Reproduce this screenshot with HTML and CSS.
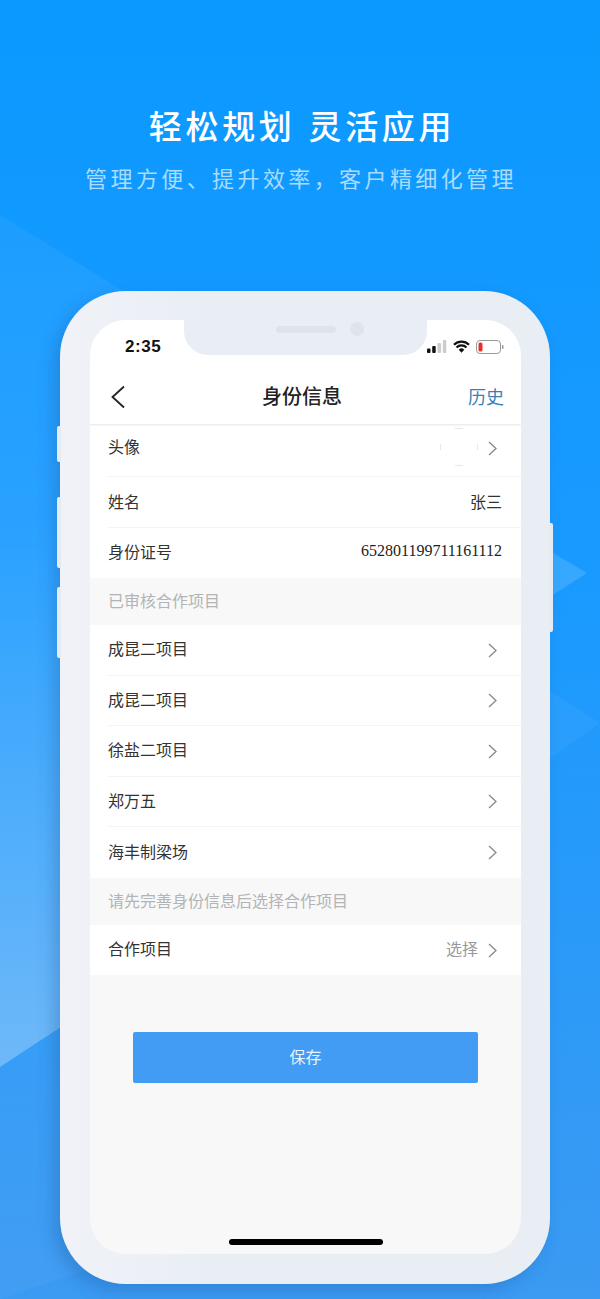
FILE: index.html
```html
<!DOCTYPE html>
<html lang="zh-CN">
<head>
  <meta charset="UTF-8">
  <meta name="viewport" content="width=device-width, initial-scale=1.0">
  <title>身份信息</title>
  <link rel="stylesheet" href="styles.css">
</head>
<body>
  <svg class="bg-shapes" width="600" height="1299" viewBox="0 0 600 1299">
    <defs>
      <linearGradient id="left-shape" x1="0" y1="0" x2="0" y2="1">
        <stop offset="0" stop-color="#fff" stop-opacity="0.05"/>
        <stop offset="0.35" stop-color="#fff" stop-opacity="0.07"/>
        <stop offset="1" stop-color="#fff" stop-opacity="0.3"/>
      </linearGradient>
    </defs>
    <polygon points="0,215 300,400 300,870 0,1067" fill="url(#left-shape)"/>
    <polygon points="0,1067 300,870 300,1200 0,1299" fill="#fff" opacity="0.04"/>
    <polygon points="470,504 587,573 470,648" fill="#fff" opacity="0.13"/>
    <polygon points="470,640 600,723 470,815" fill="#fff" opacity="0.045"/>
  </svg>

  <header class="hero">
    <h1>轻松规划 灵活应用</h1>
    <p>管理方便、提升效率&#xFF0C;客户精细化管理</p>
  </header>

  <div class="phone">
    <span class="side-btn btn-mute"></span>
    <span class="side-btn btn-up"></span>
    <span class="side-btn btn-down"></span>
    <span class="side-btn btn-power"></span>

    <div class="screen">
      <div class="notch"><span class="speaker"></span><span class="camera"></span></div>

      <div class="status-bar">
        <span class="time">2:35</span>
        <div class="status-icons">
          <svg width="20" height="13" viewBox="0 0 20 13">
            <rect x="0" y="8.500" width="3.500" height="4.500" rx="1" fill="#111"/>
            <rect x="5.200" y="6" width="3.500" height="7" rx="1" fill="#111"/>
            <rect x="10.500" y="3" width="3.500" height="10" rx="1" fill="#ccc"/>
            <rect x="15.800" y="0" width="3.500" height="13" rx="1" fill="#ccc"/>
          </svg>
          <svg width="17" height="13" viewBox="0 0 17 13">
            <path d="M1 4.800a10.600 10.600 0 0 1 15 0M3.500 7.500a7 7 0 0 1 10 0" fill="none" stroke="#111" stroke-width="2.200"/>
            <path d="M5.700 9.700a4 4 0 0 1 5.600 0L8.500 12.800z" fill="#111"/>
          </svg>
          <svg width="28" height="14" viewBox="0 0 28 14">
            <rect x="0.500" y="0.500" width="24" height="13" rx="3.500" fill="#fff" stroke="#999"/>
            <rect x="2.500" y="2.500" width="4" height="9" rx="1.500" fill="#e8302a"/>
            <rect x="26" y="5" width="1.500" height="4" rx="0.700" fill="#999"/>
          </svg>
        </div>
      </div>

      <nav class="nav-bar">
        <svg class="back" width="16" height="24" viewBox="0 0 16 24"><path d="M13 1.500 1.500 12 13 22.500" fill="none" stroke="#222" stroke-width="1.800"/></svg>
        <span class="nav-title">身份信息</span>
        <span class="nav-action">历史</span>
      </nav>

      <div class="group">
        <div class="row row-avatar">
          <span class="label">头像</span>
          <div class="right">
            <svg class="avatar" width="38" height="38" viewBox="0 0 38 38">
              <path d="M15 .5h8M15 37.500h8M.5 16v6M37.500 16v6" stroke="#e8e8e8" fill="none"/>
            </svg>
            <svg class="chevron" width="10" height="15" viewBox="0 0 10 15"><path d="M1 1l7 6.500L1 14" fill="none" stroke="#888" stroke-width="1.300"/></svg>
          </div>
        </div>
        <div class="row row-name"><span class="label">姓名</span><span class="value">张三</span></div>
        <div class="row row-id"><span class="label">身份证号</span><span class="value id-number">652801199711161112</span></div>
      </div>

      <div class="section-title">已审核合作项目</div>

      <div class="group">
        <div class="row"><span class="label">成昆二项目</span><svg class="chevron" width="10" height="15" viewBox="0 0 10 15"><path d="M1 1l7 6.500L1 14" fill="none" stroke="#888" stroke-width="1.300"/></svg></div>
        <div class="row"><span class="label">成昆二项目</span><svg class="chevron" width="10" height="15" viewBox="0 0 10 15"><path d="M1 1l7 6.500L1 14" fill="none" stroke="#888" stroke-width="1.300"/></svg></div>
        <div class="row"><span class="label">徐盐二项目</span><svg class="chevron" width="10" height="15" viewBox="0 0 10 15"><path d="M1 1l7 6.500L1 14" fill="none" stroke="#888" stroke-width="1.300"/></svg></div>
        <div class="row"><span class="label">郑万五</span><svg class="chevron" width="10" height="15" viewBox="0 0 10 15"><path d="M1 1l7 6.500L1 14" fill="none" stroke="#888" stroke-width="1.300"/></svg></div>
        <div class="row"><span class="label">海丰制梁场</span><svg class="chevron" width="10" height="15" viewBox="0 0 10 15"><path d="M1 1l7 6.500L1 14" fill="none" stroke="#888" stroke-width="1.300"/></svg></div>
      </div>

      <div class="section-title">请先完善身份信息后选择合作项目</div>

      <div class="group">
        <div class="row row-last">
          <span class="label">合作项目</span>
          <div class="right"><span class="hint">选择</span><svg class="chevron" width="10" height="15" viewBox="0 0 10 15"><path d="M1 1l7 6.500L1 14" fill="none" stroke="#888" stroke-width="1.300"/></svg></div>
        </div>
      </div>

      <button class="save-btn" type="button">保存</button>

      <span class="home-bar"></span>
    </div>
  </div>
</body>
</html>
```

FILE: styles.css
```css
* { box-sizing: border-box; }
body {
  position: relative;
  width: 600px;
  height: 1299px;
  margin: 0;
  overflow: hidden;
  background: linear-gradient(180deg, #0b99ff 0%, #1a9aff 45%, #3b9af2 100%);
  font-family: "Liberation Sans", "Noto Sans CJK SC", sans-serif;
}
.bg-shapes { position: absolute; left: 0; top: 0; }

.hero { position: relative; height: 291px; padding-top: 106px; text-align: center; }
.hero h1 { margin: 0; padding-left: 4px; font-size: 33px; line-height: 44px; font-weight: 500; letter-spacing: 3.700px; color: #fff; }
.hero p { margin: 15px 0 0; padding-left: 2px; font-size: 22px; line-height: 30px; letter-spacing: 3.400px; color: #a9dcff; }

.phone {
  position: relative;
  width: 490px;
  height: 993px;
  margin-left: 60px;
  padding: 29px 29px 30px 30px;
  background: linear-gradient(90deg, #f0f2f7 0%, #e9eef5 30%);
  border-radius: 66px;
  box-shadow: -6px 6px 16px rgba(30, 80, 150, 0.3);
}
.side-btn { position: absolute; width: 4px; background: #e6ebf2; }
.btn-mute { left: -3px; top: 135px; height: 36px; border-radius: 2px 0 0 2px; }
.btn-up { left: -3px; top: 206px; height: 71px; border-radius: 2px 0 0 2px; }
.btn-down { left: -3px; top: 296px; height: 71px; border-radius: 2px 0 0 2px; }
.btn-power { right: -3px; top: 232px; height: 109px; border-radius: 0 2px 2px 0; }

.screen {
  position: relative;
  display: flex;
  flex-direction: column;
  height: 100%;
  background: #f8f8f9;
  border-radius: 36px;
  overflow: hidden;
}
.notch {
  position: absolute;
  left: 94px;
  top: 0;
  display: flex;
  align-items: center;
  justify-content: center;
  gap: 14px;
  width: 243px;
  height: 35px;
  padding: 0 0 17px 29px;
  background: #e9eef5;
  border-radius: 0 0 24px 24px;
}
.speaker { width: 60px; height: 7px; background: #dfe3ea; border-radius: 4px; }
.camera { width: 14px; height: 14px; background: #dfe3ea; border-radius: 50%; }

.status-bar {
  display: flex;
  align-items: center;
  justify-content: space-between;
  height: 47px;
  padding: 6px 17px 0 35px;
  background: #fff;
}
.time { font-size: 17px; font-weight: 700; color: #111; letter-spacing: 0.600px; }
.status-icons { display: flex; align-items: center; gap: 6px; }

.nav-bar {
  position: relative;
  display: flex;
  align-items: center;
  justify-content: space-between;
  height: 57px;
  padding: 0 17px 0 21px;
  background: #fff;
  box-shadow: 0 1px 2px rgba(0, 0, 0, 0.1);
}
.back { margin-top: 3px; }
.nav-title { margin-left: 9px; font-size: 20px; font-weight: 500; color: #222; }
.nav-action { font-size: 18px; color: #3a7fb5; }

.group { background: #fff; }
.row {
  display: flex;
  align-items: center;
  justify-content: space-between;
  height: 50.500px;
  margin-left: 18px;
  padding-right: 23px;
  border-bottom: 1px solid #f3f4f5;
  font-size: 16px;
  color: #333;
}
.group .row:last-child { border-bottom: 0; }
.label, .value, .hint { margin-bottom: 3px; }
.chevron { margin-top: 1px; }
.row-avatar { height: 53px; padding-bottom: 5px; }
.row-avatar .avatar { margin-bottom: 2px; }
.row-name { height: 51px; padding-right: 19px; }
.row-id { height: 49.500px; padding-right: 19px; }
.row-last { height: 49.500px; }
.right { display: flex; align-items: center; gap: 10px; }
.id-number { font-family: "Liberation Serif", serif; font-size: 16px; color: #222; }
.hint { color: #999; }

.section-title {
  display: flex;
  align-items: center;
  height: 47.500px;
  padding: 0 0 3px 18px;
  font-size: 16px;
  color: #b2b4b6;
  background: #f8f8f9;
}

.save-btn {
  align-self: center;
  width: 345px;
  height: 51px;
  margin-top: 57.500px;
  padding: 0 0 3px;
  border: 0;
  border-radius: 2px;
  background: #439cf3;
  color: #e8f3fe;
  font-family: inherit;
  font-size: 16px;
}
.home-bar {
  position: absolute;
  left: 139px;
  bottom: 9px;
  width: 154px;
  height: 6px;
  background: #000;
  border-radius: 3px;
}
```
